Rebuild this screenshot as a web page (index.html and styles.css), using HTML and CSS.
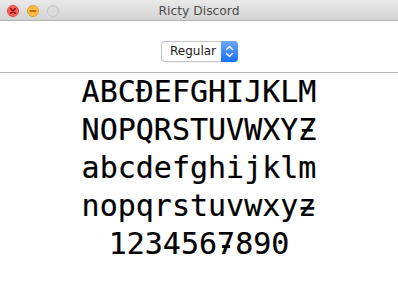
FILE: index.html
```html
<!DOCTYPE html>
<html lang="en">
<head>
    <meta charset="UTF-8">
    <title>Ricty Discord</title>
    <link rel="stylesheet" href="styles.css">
</head>
<body>
<div class="window">
    <!-- Заголовок окна -->
    <div class="titlebar">
        <div class="lights">
            <span class="light close">
                <svg width="12" height="12" viewBox="0 0 12 12"><path d="M3.8 3.8 L8.2 8.2 M8.2 3.8 L3.8 8.2" stroke="#7e0508" stroke-width="1.6" stroke-linecap="round"/></svg>
            </span>
            <span class="light minimize">
                <svg width="12" height="12" viewBox="0 0 12 12"><path d="M3.2 6 H8.8" stroke="#985712" stroke-width="1.6" stroke-linecap="round"/></svg>
            </span>
            <span class="light zoom"></span>
        </div>
        <div class="title">Ricty Discord</div>
        <div></div>
    </div>

    <!-- Выбор начертания -->
    <div class="toolbar">
        <div class="select">
            <span class="select-label">Regular</span>
            <span class="select-arrows">
                <svg width="17" height="21" viewBox="0 0 17 21"><path d="M5.5 8.5 L8.5 5.5 L11.5 8.5 M5.5 12.5 L8.5 15.5 L11.5 12.5" fill="none" stroke="#fff" stroke-width="1.4" stroke-linecap="round" stroke-linejoin="round"/></svg>
            </span>
        </div>
    </div>

    <!-- Образец шрифта -->
    <div class="sample">
        <div>ABCĐEFGHIJKLM</div>
        <div>NOPQRSTUVWXYƵ</div>
        <div>abcdefghijklm</div>
        <div>nopqrstuvwxyƶ</div>
        <div>123456<span class="seven">7</span>890</div>
    </div>
</div>
</body>
</html>
```

FILE: styles.css
```css
:root {
    --color-title: #4c4c4c;
    --color-border: #b6b6b6;
    --color-select-border: #c3c3c3;
    --color-blue-top: #6aa9fb;
    --color-blue-bottom: #176ef6;
}

body {
    margin: 0;
    background-color: #fff;
    font-family: "DejaVu Sans", sans-serif;
}

.window {
    width: 398px;
    height: 282px;
    background-color: #fff;
    overflow: hidden;
}

/* Заголовок */
.titlebar {
    display: grid;
    grid-template-columns: 1fr auto 1fr;
    align-items: center;
    height: 20px;
    background: linear-gradient(#e9e9e9, #d3d3d3);
    border-bottom: 1px solid #b4b4b4;
}

.lights {
    display: flex;
    gap: 8px;
    padding-left: 7px;
    padding-top: 2px;
}

.light {
    width: 12px;
    height: 12px;
    border-radius: 50%;
    box-sizing: border-box;
    display: flex;
}

.close {
    background-color: #fc605c;
    border: 1px solid #df4744;
}

.minimize {
    background-color: #fdbc40;
    border: 1px solid #de9f34;
}

.zoom {
    background-color: #dcdcdc;
    border: 1px solid #c6c6c6;
}

.light svg {
    margin: -1px;
}

.title {
    font-size: 12.3px;
    color: var(--color-title);
    padding-top: 1px;
}

/* Панель с выбором */
.toolbar {
    display: flex;
    justify-content: center;
    padding: 20px 0 10px;
    border-bottom: 1px solid var(--color-border);
}

.select {
    display: flex;
    height: 21px;
    box-sizing: border-box;
    margin-left: 1px;
    border: 1px solid var(--color-select-border);
    border-right: none;
    border-radius: 4px;
    background-color: #fff;
    box-shadow: 0 1px 0 rgba(0, 0, 0, 0.04);
}

.select-label {
    font-size: 12px;
    color: #1a1a1a;
    line-height: 19px;
    padding: 0 5px 0 8px;
}

.select-arrows {
    width: 17px;
    margin: -1px 0;
    border-radius: 0 4px 4px 0;
    background: linear-gradient(var(--color-blue-top), var(--color-blue-bottom));
}

.select-arrows svg {
    display: block;
}

/* Образец */
.sample {
    font-family: "DejaVu Sans Mono", monospace;
    font-size: 30px;
    line-height: 38px;
    color: #000;
    text-align: center;
    -webkit-text-stroke: 0.2px #000;
}

.seven {
    position: relative;
}

.seven::after {
    content: "";
    position: absolute;
    left: 5px;
    right: 5px;
    top: 19px;
    height: 2.5px;
    background-color: #000;
}
```
